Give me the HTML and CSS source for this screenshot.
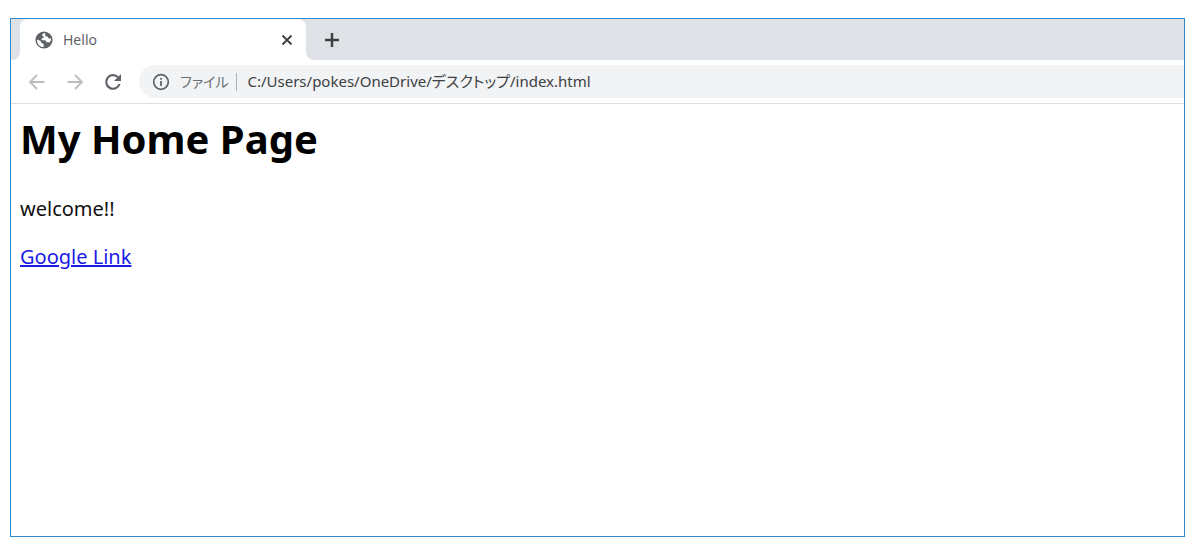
FILE: index.html
```html
<!DOCTYPE html>
<html lang="ja">
<head>
<meta charset="utf-8">
<title>Hello</title>
<link rel="stylesheet" href="styles.css">
</head>
<body>
<div class="window">
  <header>
    <div class="tab-strip">
      <div class="strip-start"></div>
      <div class="tab-slot">
        <div class="tab">
          <svg class="icon" viewBox="0 0 18 18" aria-hidden="true">
            <circle cx="9" cy="9" r="8.6" fill="#5f6368"/>
            <path d="M10.500 2C8 2.200 6.800 3.500 7.200 4.800C8 5 8.800 5.200 8.800 6.200C8.600 7.300 7 7 6.500 7.800C6.300 8.600 6.800 9.200 7.600 9.200H10C11 9.400 10.800 10.800 11.800 11.200C12.800 11.500 13.800 11 14.500 11.600C15.700 10.300 16.200 8.800 16 7.200C15 7.800 13.500 7.800 13.100 6.800C12.900 5.800 12.600 5.400 11.500 5.500C10 5.400 9.800 3.600 10.500 2Z" fill="#fff"/>
            <path d="M2 8.400C3.500 9.300 5.800 9.400 6 10.800C6 12.200 6.800 12.400 8 12.500C9 12.800 8.600 14.500 8.600 16.100C4.800 16 1.800 12.800 2 8.400Z" fill="#fff"/>
          </svg>
          <span class="tab-title">Hello</span>
          <button class="icon-button close" aria-label="Close tab">
            <svg class="icon" viewBox="0 0 18 18"><path d="M4.500 4.500L13.500 13.500M13.500 4.500L4.500 13.500" stroke="#3c4043" stroke-width="1.800" fill="none"/></svg>
          </button>
        </div>
      </div>
      <div class="strip-end">
        <button class="icon-button" aria-label="New tab">
          <svg class="icon" viewBox="0 0 18 18"><path d="M9 2V16M2 9H16" stroke="#3c4043" stroke-width="2.400" fill="none"/></svg>
        </button>
      </div>
    </div>
    <div class="toolbar">
      <button class="icon-button" aria-label="Back">
        <svg class="icon" viewBox="0 0 18 18"><path d="M16.500 9H2.500M9 2L2 9L9 16" stroke="#babcbe" stroke-width="1.800" fill="none"/></svg>
      </button>
      <button class="icon-button" aria-label="Forward">
        <svg class="icon" viewBox="0 0 18 18"><path d="M1.500 9H15.500M9 2L16 9L9 16" stroke="#babcbe" stroke-width="1.800" fill="none"/></svg>
      </button>
      <button class="icon-button" aria-label="Reload">
        <svg class="icon" viewBox="0 0 18 18"><path d="M15.500 11A6.800 6.800 0 1 1 14 4.300" stroke="#5f6368" stroke-width="2.200" fill="none"/><path d="M17 1V8H10Z" fill="#5f6368"/></svg>
      </button>
      <div class="omnibox">
        <svg class="icon" viewBox="0 0 18 18" aria-hidden="true"><circle cx="9" cy="9" r="7.300" stroke="#5f6368" stroke-width="1.700" fill="none"/><path d="M9 8V13M9 5V6.800" stroke="#5f6368" stroke-width="1.800"/></svg>
        <label class="scheme" for="address">ファイル</label>
        <input class="address" id="address" type="text" value="C:/Users/pokes/OneDrive/デスクトップ/index.html">
      </div>
    </div>
  </header>
  <main class="page">
    <h1>My Home Page</h1>
    <p>welcome!!</p>
    <a href="https://www.google.com/">Google Link</a>
  </main>
</div>
</body>
</html>
```
FILE: styles.css
```css
* {
  box-sizing: border-box;
}

body {
  display: flex;
  min-height: 100vh;
  margin: 0;
  padding: 18px 15px 22px 10px;
  background: #fff;
  font-family: "Noto Sans", "Noto Sans CJK JP", sans-serif;
}

.window {
  flex: 1;
  min-width: 0;
  border: 1px solid #2a8ad0;
}

.icon {
  display: block;
  flex: none;
  width: 18px;
  height: 18px;
}

.icon-button {
  flex: none;
  padding: 0;
  border: 0;
  background: none;
}

.tab-strip {
  display: flex;
  height: 41px;
}

.strip-start,
.strip-end {
  background: #dee1e6;
}

.strip-start {
  width: 9px;
  border-bottom-right-radius: 8px;
}

/* Grey shows behind the rounded top corners only. */
.tab-slot {
  display: flex;
  width: 286px;
  background: linear-gradient(#dee1e6 50%, #fff 50%);
}

.tab {
  display: flex;
  flex: 1;
  align-items: center;
  padding: 0 10px 0 15px;
  border-radius: 8px 8px 0 0;
  background: #fff;
}

.tab-title {
  margin-left: 10px;
  color: #5f6368;
  font-size: 14px;
}

.close {
  margin-left: auto;
}

.strip-end {
  display: flex;
  flex: 1;
  align-items: center;
  padding-left: 17px;
  border-bottom-left-radius: 8px;
}

.toolbar {
  display: flex;
  align-items: center;
  gap: 20px;
  height: 44px;
  padding-left: 17px;
  border-bottom: 1px solid #dcdee0;
}

.omnibox {
  display: flex;
  flex: 1;
  align-items: center;
  height: 33px;
  margin-left: -3px;
  padding-left: 13px;
  border-radius: 17px 0 0 17px;
  background: #f1f3f4;
  font-feature-settings: "palt";
}

.scheme {
  margin-left: 10px;
  padding-right: 8px;
  border-right: 1px solid #aeb1b5;
  color: #6b6f73;
  font-size: 14px;
  line-height: 18px;
}

.address {
  flex: 1;
  min-width: 0;
  height: 24px;
  margin-left: 10px;
  padding: 0 0 2px;
  border: 0;
  background: none;
  color: #3c4043;
  font-family: inherit;
  font-size: 15px;
  font-feature-settings: inherit;
}

.page {
  padding: 7px 9px;
  color: #111;
  font-size: 20px;
  line-height: 28px;
}

h1 {
  margin: 0 0 28px;
  color: #000;
  font-size: 40px;
  line-height: 56px;
}

p {
  margin: 0 0 20px;
}

a {
  color: #1a1ae6;
}
```
